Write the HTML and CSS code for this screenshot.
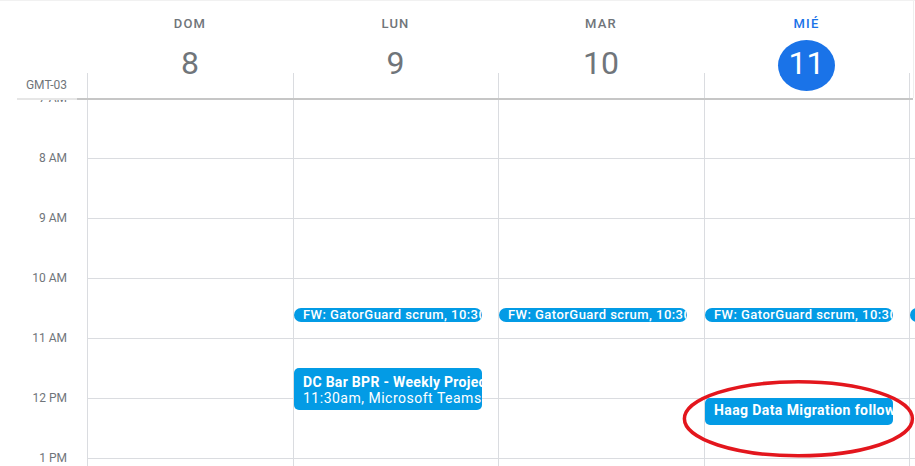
FILE: index.html
```html
<!DOCTYPE html>
<html lang="es">
<head>
<meta charset="utf-8">
<title>Calendario</title>
<link rel="stylesheet" href="styles.css">
</head>
<body>
<div class="cal">
  <div class="head">
    <div class="tz">GMT-03</div>
    <div class="day"><div class="dname">DOM</div><div class="dnum">8</div></div>
    <div class="day"><div class="dname">LUN</div><div class="dnum">9</div></div>
    <div class="day"><div class="dname">MAR</div><div class="dnum">10</div></div>
    <div class="day today"><div class="dname">MIÉ</div><div class="dnum">11</div></div>
    <div class="day"></div>
  </div>
  <div class="head-rule"></div>
  <div class="grid">
    <div class="gutter">
      <div class="hours">
        <div class="hr">7 AM</div>
        <div class="hr">8 AM</div>
        <div class="hr">9 AM</div>
        <div class="hr">10 AM</div>
        <div class="hr">11 AM</div>
        <div class="hr">12 PM</div>
        <div class="hr">1 PM</div>
      </div>
    </div>
    <div class="col"></div>
    <div class="col">
      <div class="ev short">FW: GatorGuard scrum, 10:30</div>
      <div class="ev dc"><div class="t">DC Bar BPR - Weekly Project</div><div class="s">11:30am, Microsoft Teams</div></div>
    </div>
    <div class="col">
      <div class="ev short">FW: GatorGuard scrum, 10:30</div>
    </div>
    <div class="col">
      <div class="ev short">FW: GatorGuard scrum, 10:30</div>
      <div class="ev haag">Haag Data Migration follow up</div>
    </div>
    <div class="col">
      <div class="ev short"></div>
    </div>
  </div>
</div>
<svg class="mark" width="240" height="84" viewBox="0 0 240 84"><ellipse cx="118.4" cy="40.8" rx="114" ry="37" fill="none" stroke="#e3161d" stroke-width="3.5"/></svg>
</body>
</html>
```
FILE: styles.css
```css
* { box-sizing: border-box; }
html, body { margin: 0; padding: 0; }
body {
  width: 915px;
  height: 466px;
  overflow: hidden;
  position: relative;
  background: #fff;
  font-family: Roboto, "Liberation Sans", sans-serif;
}
.cal {
  width: 915px;
  height: 466px;
  overflow: hidden;
  border-top: 1px solid #f1f1f1;
}
.head {
  display: grid;
  grid-template-columns: 87px 206px 205px 206px 205px 206px;
  height: 97px;
  background: linear-gradient(#eeeeee, #eeeeee) 913px 0 / 1px 97px no-repeat;
}
.tz {
  align-self: end;
  text-align: right;
  padding-right: 20px;
  margin-bottom: 6px;
  font-size: 12px;
  line-height: 14px;
  color: #70757a;
}
.day {
  display: flex;
  flex-direction: column;
  align-items: center;
  background: linear-gradient(#dadce0, #dadce0) left bottom / 1px 25px no-repeat;
}
.dname {
  margin-top: 15px;
  font-size: 13px;
  line-height: 16px;
  font-weight: 500;
  letter-spacing: 1.2px;
  color: #70757a;
}
.dnum {
  margin-top: 8px;
  width: 57px;
  height: 51px;
  border-radius: 50%;
  display: flex;
  align-items: center;
  justify-content: center;
  padding-bottom: 6px;
  font-size: 32px;
  line-height: 36px;
  color: #70757a;
}
.today .dname { color: #1a73e8; }
.today .dnum { background: #1a73e8; color: #fff; }
.head-rule {
  height: 2px;
  background: linear-gradient(to right, transparent 17px, #e6e6e6 17px, #e6e6e6 77px, #c6c6c6 77px, #c6c6c6 913px, transparent 913px);
}
.grid {
  display: grid;
  grid-template-columns: 87px 206px 205px 206px 205px 206px;
  height: 366px;
  background-image: repeating-linear-gradient(to bottom, transparent 0, transparent 58px, #dadce0 58px, #dadce0 59px, transparent 59px, transparent 60px);
  background-size: calc(100% - 77px) 100%;
  background-position: 77px 0;
  background-repeat: no-repeat;
}
.gutter {
  overflow: hidden;
  background: #fff;
}
.hours {
  margin-top: -32px;
  display: flex;
  flex-direction: column;
}
.hr {
  height: 60px;
  display: flex;
  align-items: center;
  justify-content: flex-end;
  padding-right: 20px;
  font-size: 12px;
  color: #70757a;
}
.col {
  position: relative;
  border-left: 1px solid #dadce0;
}
.ev {
  position: absolute;
  left: 0;
  width: 188px;
  background: #039be5;
  color: #fff;
  overflow: hidden;
  white-space: nowrap;
  border-radius: 5px;
  padding-left: 9px;
}
.ev.short {
  top: 208px;
  height: 14px;
  border-radius: 7px;
  font-size: 13px;
  line-height: 14px;
  font-weight: 500;
  letter-spacing: 0.45px;
}
.ev.dc {
  top: 268px;
  height: 42px;
  padding-top: 6px;
  font-size: 14px;
  line-height: 16px;
}
.ev.dc .t { font-weight: 700; letter-spacing: 0.3px; }
.ev.dc .s { letter-spacing: 0.5px; }
.ev.haag {
  top: 298px;
  height: 27px;
  padding-top: 4px;
  font-size: 14px;
  line-height: 16px;
  font-weight: 700;
  letter-spacing: 0.4px;
}
.mark {
  position: absolute;
  left: 680px;
  top: 378px;
  pointer-events: none;
}
```
